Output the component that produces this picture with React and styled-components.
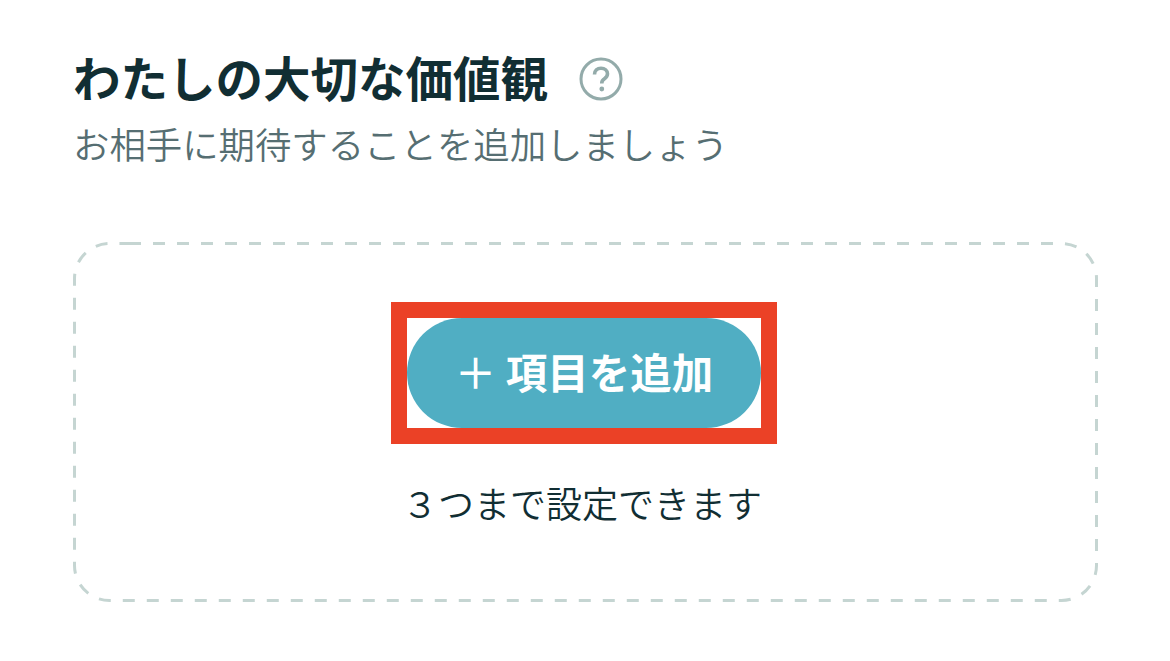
import styled, { createGlobalStyle } from "styled-components";

const GlobalStyle = createGlobalStyle`
  html, body {
    margin: 0;
    padding: 0;
    background: #fff;
  }
  body {
    font-family: "Noto Sans CJK JP", "Noto Sans", sans-serif;
    color: #112e33;
  }
`;

export default function App() {
  return (
    <>
      <GlobalStyle />
      <Page>
        <TitleRow>
          <Title>わたしの大切な価値観</Title>
          <HelpIcon viewBox="0 0 44 44" aria-hidden="true">
            <circle cx="22" cy="22" r="20" fill="none" stroke="#93abaa" strokeWidth="3" />
            <path
              d="M15.500 17.500c0-4 2.800-6.300 6.500-6.300 3.800 0 6.500 2.300 6.500 5.600 0 2.500-1.300 3.800-3 5-1.900 1.300-2.700 2.200-2.700 4.200v.5"
              fill="none"
              stroke="#93abaa"
              strokeWidth="3.600"
            />
            <circle cx="22.800" cy="32" r="2.400" fill="#93abaa" />
          </HelpIcon>
        </TitleRow>
        <Subtitle>お相手に期待することを追加しましょう</Subtitle>
        <DropArea>
          <DashedOutline viewBox="0 0 1025 360" aria-hidden="true">
            <path
              d="M56 1.500H988.500A35 35 0 0 1 1023.500 36.500V323.500A35 35 0 0 1 988.500 358.500H36.500A35 35 0 0 1 1.500 323.500V36.500A35 35 0 0 1 36.500 1.500Z"
              fill="none"
              stroke="#c5d5d2"
              strokeWidth="3"
              strokeDasharray="12 12"
            />
          </DashedOutline>
          <Highlight>
            <AddButton type="button">
              <PlusMark>＋</PlusMark> 項目を追加
            </AddButton>
          </Highlight>
          <Note>３つまで設定できます</Note>
        </DropArea>
      </Page>
    </>
  );
}

const Page = styled.div`
  box-sizing: border-box;
  width: 1170px;
  height: 661px;
  padding: 47px 72px 0 73px;
  overflow: hidden;
`;

const TitleRow = styled.div`
  display: flex;
  align-items: center;
  gap: 31px;
  height: 60px;
`;

const Title = styled.h1`
  margin: 0;
  font-size: 47.500px;
  font-weight: 700;
  line-height: 60px;
  color: #112e33;
`;

const HelpIcon = styled.svg`
  width: 44px;
  height: 44px;
  margin-top: 3px;
  flex: none;
`;

const Subtitle = styled.p`
  margin: 11px 0 0;
  font-size: 36.400px;
  font-weight: 350;
  line-height: 50px;
  color: #566e72;
`;

const DropArea = styled.div`
  position: relative;
  box-sizing: border-box;
  display: flex;
  flex-direction: column;
  align-items: center;
  height: 360px;
  margin-top: 74px;
  padding: 60px 3px 0 0;
`;

const DashedOutline = styled.svg`
  position: absolute;
  top: 0;
  left: 0;
  width: 1025px;
  height: 360px;
`;

const Highlight = styled.div`
  display: flex;
  border: 16px solid #eb4126;
`;

const AddButton = styled.button`
  width: 354px;
  height: 110px;
  padding: 0 0 5px;
  border: none;
  border-radius: 55px;
  background: #50aec3;
  color: #fff;
  font-family: inherit;
  font-size: 41.500px;
  font-weight: 700;
`;

const PlusMark = styled.span`
  font-weight: 500;
`;

const Note = styled.p`
  margin: 33px 4px 0 0;
  font-size: 36px;
  font-weight: 350;
  line-height: 50px;
  color: #112e33;
`;
